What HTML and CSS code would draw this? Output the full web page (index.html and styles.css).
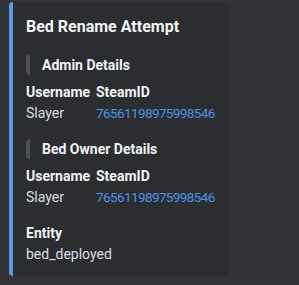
FILE: index.html
```html
<!DOCTYPE html>
<html lang="en">
<head>
  <meta charset="UTF-8" />
  <meta name="viewport" content="width=device-width, initial-scale=1.0" />
  <title>Bed Rename Attempt</title>
  <link rel="stylesheet" href="styles.css">
</head>
<body>
  <div class="embed">
    <div class="embed-title">Bed Rename Attempt</div>

    <div class="quote">Admin Details</div>
    <div class="fields">
      <div class="field">
        <div class="field-name">Username</div>
        <div class="field-value">Slayer</div>
      </div>
      <div class="field">
        <div class="field-name">SteamID</div>
        <div class="field-value"><a class="link" href="#">76561198975998546</a></div>
      </div>
    </div>

    <div class="quote">Bed Owner Details</div>
    <div class="fields">
      <div class="field">
        <div class="field-name">Username</div>
        <div class="field-value">Slayer</div>
      </div>
      <div class="field">
        <div class="field-name">SteamID</div>
        <div class="field-value"><a class="link" href="#">76561198975998546</a></div>
      </div>
    </div>

    <div class="field field-last">
      <div class="field-name">Entity</div>
      <div class="field-value">bed_deployed</div>
    </div>
  </div>
</body>
</html>
```

FILE: styles.css
```css
body { margin: 0; background-color: #313338; font-family: Roboto, "Noto Sans", sans-serif; color: #dbdee1; }

.embed {
  margin: 2px 0 0 9px;
  width: 199px;
  background-color: #2b2d31;
  border-left: 4px solid #5a9ae6;
  border-radius: 4px;
  padding: 14px 4px 12px 13px;
}

.embed-title { font-size: 16px; line-height: 22px; font-weight: 700; color: #f2f3f5; margin-bottom: 17px; }

.quote {
  border-left: 4px solid #4e5058;
  border-radius: 4px;
  padding-left: 12px;
  font-size: 14px; line-height: 20px; font-weight: 700; color: #f2f3f5;
  margin-bottom: 7px;
}

.fields { display: grid; grid-template-columns: 70px 1fr; margin-bottom: 16px; }

.field-name { font-size: 14px; line-height: 20px; font-weight: 700; color: #f2f3f5; }
.field-value { font-size: 14px; line-height: 20px; margin-top: 1px; }

.link { color: #4b94e2; text-decoration: none; font-size: 13.5px; letter-spacing: -0.6px; }
```
